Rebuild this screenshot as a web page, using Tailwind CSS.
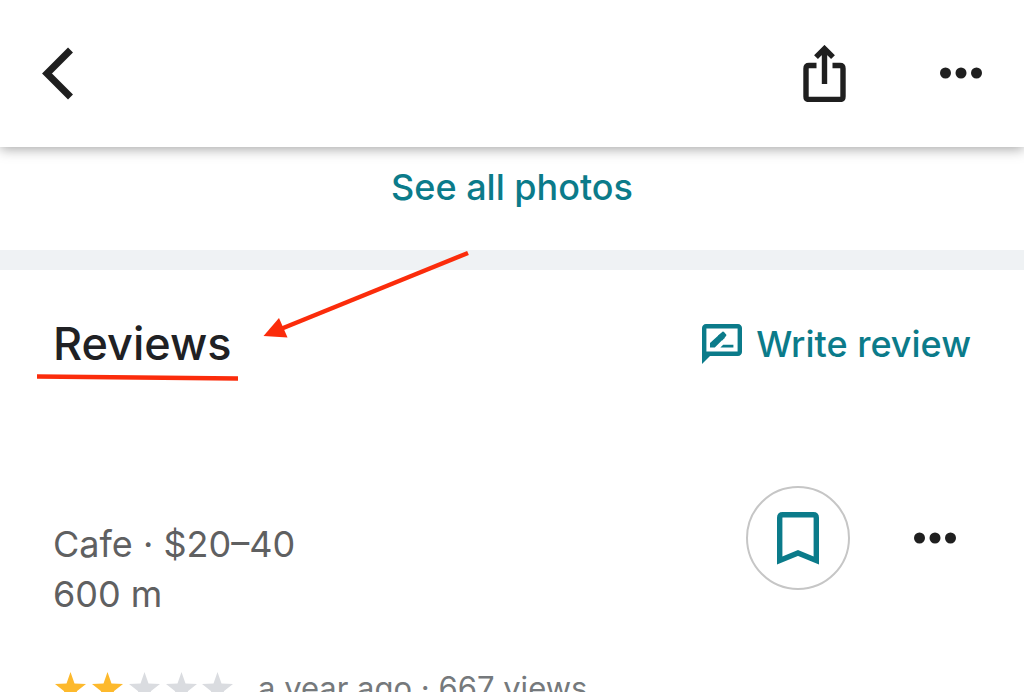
<!DOCTYPE html>
<html lang="en">
  <head>
    <meta charset="UTF-8" />
    <meta name="viewport" content="width=device-width, initial-scale=1.0" />
    <title>Reviews</title>
    <script src="https://cdn.jsdelivr.net/npm/@tailwindcss/browser@4"></script>
  </head>
  <body class="h-screen overflow-hidden bg-white font-['Inter',sans-serif] text-[#202124]">
    <!-- top bar -->
    <header class="relative flex items-center justify-between bg-white px-[42px] py-[45px] shadow-[0_2px_12px_rgba(0,0,0,0.36)]">
      <button type="button" aria-label="Back">
        <svg class="block" width="31" height="57" viewBox="0 0 31 57" fill="none" stroke="#1f1f1f" stroke-width="7" stroke-linejoin="miter">
          <path d="M28.500 5L5 28.500L28.500 52" />
        </svg>
      </button>
      <div class="flex items-center gap-[94px]">
        <button type="button" aria-label="Share">
          <svg class="block" width="43" height="57" viewBox="0 0 43 57" fill="none" stroke="#1f1f1f" stroke-width="5.400">
            <path d="M13.500 20.500H6Q3 20.500 3 23.500V51.500Q3 54.500 6 54.500H37Q40 54.500 40 51.500V23.500Q40 20.500 37 20.500H29.500" />
            <path d="M21.500 39V4M13 12.200L21.500 3.700L30 12.200" />
          </svg>
        </button>
        <button type="button" aria-label="More options">
          <svg class="block" width="42" height="13" viewBox="0 0 42 13" fill="#1f1f1f">
            <circle cx="5.500" cy="6" r="5.500" />
            <circle cx="21" cy="6" r="5.500" />
            <circle cx="36.500" cy="6" r="5.500" />
          </svg>
        </button>
      </div>
    </header>

    <main>
      <div class="flex justify-center border-b-[20px] border-[#eff2f4] pt-5 pb-[43px]">
        <a href="#" class="text-4xl leading-10 font-medium text-[#0b7b8a]">See all photos</a>
      </div>

      <!-- reviews heading -->
      <section class="relative flex items-center justify-between px-[53px] pt-[46px]">
        <h1 class="text-[45px] leading-[56px] font-medium">Reviews</h1>
        <a href="#" class="flex items-center gap-[14px] text-4xl leading-10 font-medium text-[#0b7b8a]">
          <svg width="40" height="40" viewBox="2 2 20 20" fill="currentColor">
            <path d="M20 2H4c-1.100 0-2 .900-2 2v18l4-4h14c1.100 0 2-.900 2-2V4c0-1.100-.900-2-2-2zm-.200 13.800H4.200V4.200h15.600z" />
            <path d="M6 13.700V11.500L10.300 7.600L12.400 9.800L8.400 13.700ZM10.900 7.100L12.200 5.900Q12.600 5.600 13 6L14.100 7.200Q14.400 7.600 14 8L13 9.200ZM11.200 13.700L12.600 12.400H17.700V13.700Z" />
            <path d="M10 7.800L11.200 6.800L13.300 9L12.100 10.200Z" />
          </svg>
          Write review
        </a>
        <svg class="pointer-events-none absolute -top-5 left-9" width="434" height="132" viewBox="0 0 434 132" stroke="#fb2c0b" fill="#fb2c0b" aria-hidden="true">
          <path d="M432 3L246 78.500" stroke-width="4.500" />
          <path d="M227.500 86L243 68L251.500 87.500Z" stroke="none" />
          <path d="M1 126.500L202 128.500" stroke-width="4.500" />
        </svg>
      </section>

      <!-- place -->
      <section class="flex justify-between pt-[114px] pr-[68px] pl-[53px]">
        <p class="pt-[33px] text-4xl leading-[50px] text-[#5f6061]">Cafe · $20–40<br />600 m</p>
        <div class="flex h-[104px] items-center gap-16">
          <button type="button" aria-label="Save" class="flex size-[104px] items-center justify-center rounded-full border-2 border-[#c6c6c6]">
            <svg width="42" height="53" viewBox="0 0 42 53" fill="none" stroke="#0b7b8a" stroke-width="5.400">
              <path d="M2.700 48.500V5.700Q2.700 2.700 5.700 2.700H36.300Q39.300 2.700 39.300 5.700V48.500L21 41Z" />
            </svg>
          </button>
          <button type="button" aria-label="More about this place">
            <svg class="block" width="42" height="12" viewBox="0 0 42 12" fill="#1f1f1f">
              <circle cx="5.500" cy="6" r="5.500" />
              <circle cx="21" cy="6" r="5.500" />
              <circle cx="36.500" cy="6" r="5.500" />
            </svg>
          </button>
        </div>
      </section>

      <!-- rating -->
      <section class="flex items-center gap-6 px-[54px] pt-[49px]">
        <svg width="180" height="32" viewBox="0 0 180 32" role="img" aria-label="2 out of 5 stars">
          <defs>
            <path id="star" d="M16.500 0L20.500 11.500L32 12L22.800 19.300L26 31L16.500 24.300L7 31L10.200 19.300L1 12L12.500 11.500Z" />
          </defs>
          <use href="#star" fill="#fdb92c" />
          <use href="#star" x="37" fill="#fdb92c" />
          <use href="#star" x="74" fill="#dadce0" />
          <use href="#star" x="111" fill="#dadce0" />
          <use href="#star" x="147" fill="#dadce0" />
        </svg>
        <p class="text-[31px] leading-10 text-[#75797c]">a year ago · 667 views</p>
      </section>
    </main>
  </body>
</html>
